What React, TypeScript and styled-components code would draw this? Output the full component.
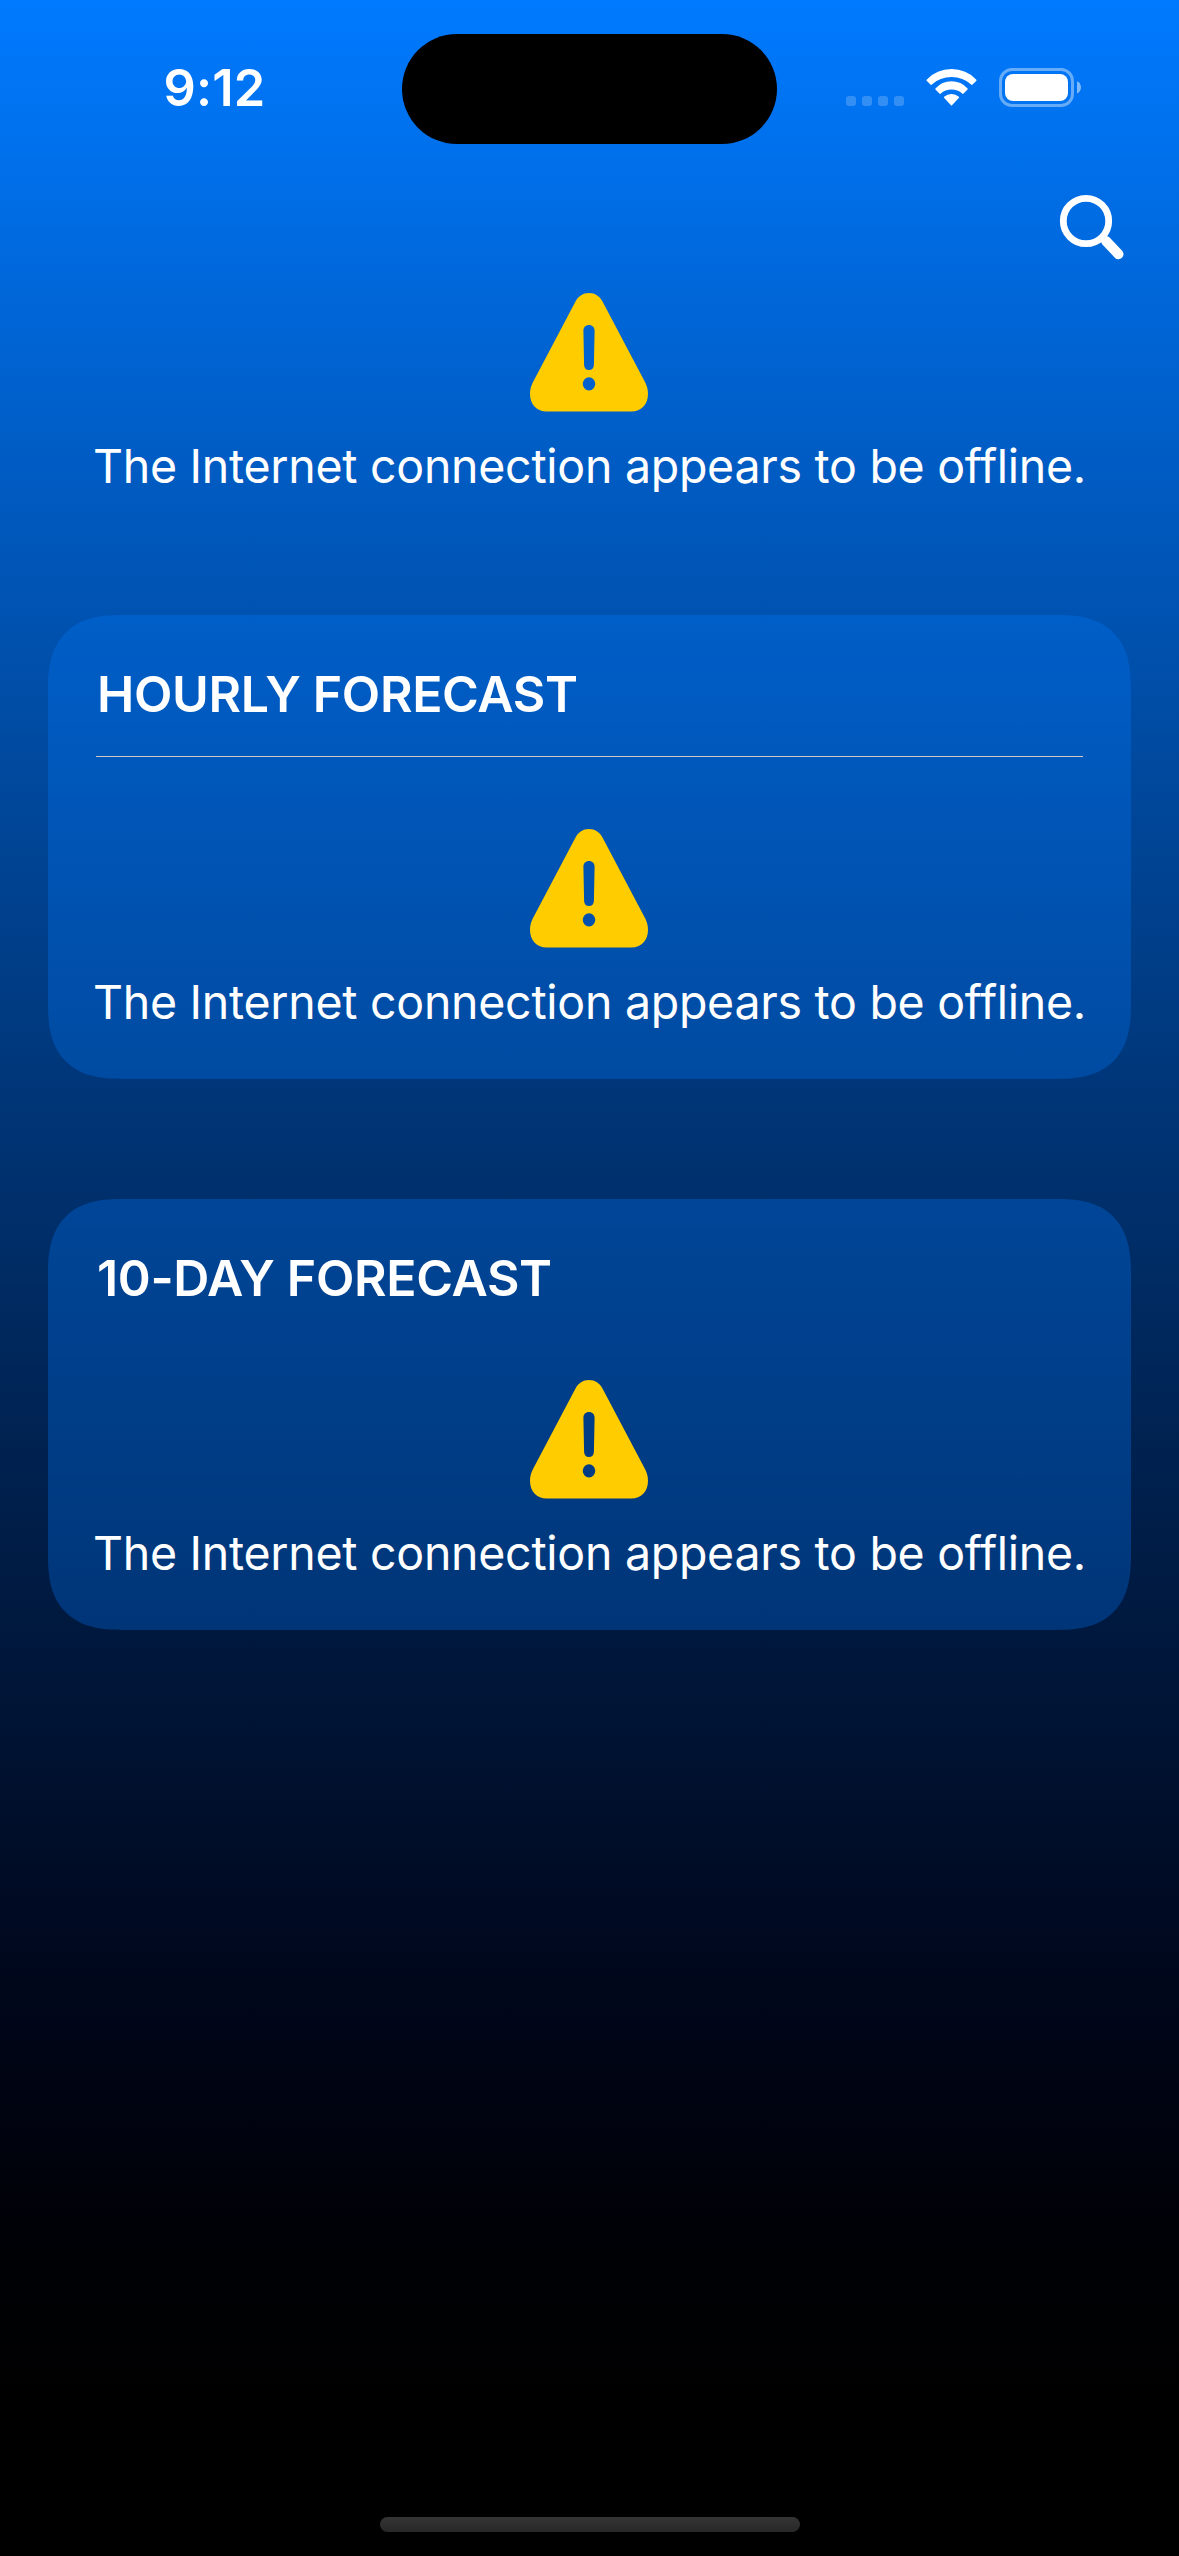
import React from "react";
import styled, { createGlobalStyle } from "styled-components";

const Global = createGlobalStyle`
  * { box-sizing: border-box; }
  body { margin: 0; background: #000; }
`;

const Screen = styled.main`
  width: 1179px;
  height: 2556px;
  overflow: hidden;
  display: flex;
  flex-direction: column;
  font-family: Inter, "Liberation Sans", sans-serif;
  color: #fff;
  background: linear-gradient(180deg in oklab, #007aff 0%, #000 100%);
`;

const StatusBar = styled.header`
  flex: none;
  height: 177px;
  padding-top: 34px;
  display: grid;
  grid-template-columns: 402px 375px 402px;
  align-items: start;
`;

const Clock = styled.time`
  padding: 22px 0 0 163.5px;
  font-size: 50.5px;
  line-height: 64px;
  font-weight: 600;
  letter-spacing: 0.2px;
`;

const Island = styled.div`
  height: 110px;
  border-radius: 55px;
  background: #000;
`;

const Indicators = styled.div`
  display: flex;
  padding: 34px 0 0 69px;
`;

const SignalDots = styled.div`
  display: flex;
  gap: 6px;
  padding-top: 28px;
  width: 80px;
`;

const Dot = styled.i`
  width: 10px;
  height: 10px;
  border-radius: 3px;
  background: rgba(255, 255, 255, 0.2);
`;

const Wifi = styled.svg`
  width: 51px;
  height: 39px;
  margin-right: 22px;
`;

const Battery = styled.svg`
  width: 83px;
  height: 39px;
`;

const Toolbar = styled.nav`
  flex: none;
  height: 116px;
  padding: 17px 54px 0 0;
  display: flex;
  justify-content: flex-end;
`;

const SearchButton = styled.button`
  width: 66px;
  height: 66px;
  padding: 0;
  border: 0;
  background: none;
  color: #fff;
`;

const Notice = styled.section`
  display: flex;
  flex-direction: column;
  align-items: center;
`;

const WarningIcon = styled.svg`
  display: block;
  width: 118px;
  height: 119px;
  margin-right: 1px;
`;

const Message = styled.p`
  margin: 23px 0 0;
  font-size: 46.5px;
  line-height: 62px;
  letter-spacing: -0.28px;
  white-space: nowrap;
`;

const Card = styled.section<{ $height: number; $top: number }>`
  flex: none;
  height: ${(p) => p.$height}px;
  margin: ${(p) => p.$top}px 48px 0;
  padding: 48px 48px 0;
  border-radius: 75px;
  corner-shape: superellipse(1.37);
  background: rgba(0, 122, 255, 0.3);
`;

const Heading = styled.h2`
  margin: 0 0 0 1px;
  font-size: 50px;
  line-height: 62px;
  font-weight: 600;
  letter-spacing: -0.35px;
  white-space: nowrap;
`;

const Divider = styled.hr`
  height: 1px;
  margin: 31px 0 0;
  border: 0;
  background: #d0c8c2;
`;

const CardBody = styled.div<{ $gap: number }>`
  padding-top: ${(p) => p.$gap}px;
`;

const HomeIndicator = styled.div`
  flex: none;
  width: 420px;
  height: 15px;
  margin: auto 0 24px 380px;
  border-radius: 8px;
  background: linear-gradient(#353535, #272727);
`;

function OfflineNotice() {
  return (
    <Notice>
      <WarningIcon viewBox="0 0 118 119" fill="#fc0">
        <path
          fillRule="evenodd"
          d="M59 0C65 0 69.500 3 72.500 8.500L115.500 90C117.200 93.500 118 97 118 101C118 111.500 111 118.500 101.500 118.500H16.500C7 118.500 0 111.500 0 101C0 97 .8 93.500 2.500 90L45.500 8.500C48.500 3 53 0 59 0ZM59 32C55.700 32 53.300 34.400 53.400 37.800L54.100 72C54.200 75 56 77 59 77S63.800 75 63.900 72L64.600 37.800C64.700 34.400 62.300 32 59 32ZM59 84.200A6.300 6.600 0 1 0 59 97.400A6.300 6.600 0 1 0 59 84.200Z"
        />
      </WarningIcon>
      <Message>The Internet connection appears to be offline.</Message>
    </Notice>
  );
}

export default function App() {
  return (
    <>
      <Global />
      <Screen>
        <StatusBar>
          <Clock>9:12</Clock>
          <Island />
          <Indicators>
            <SignalDots>
              <Dot />
              <Dot />
              <Dot />
              <Dot />
            </SignalDots>
            <Wifi viewBox="0 0 51 39" fill="#fff" stroke="#fff" strokeWidth="1.5" strokeLinejoin="round">
              <path d="M1.200 12.200A33.700 33.700 0 0 1 49.800 12.200L46 16.100A30.900 30.900 0 0 0 5 16.100Z" />
              <path d="M10 20.900A20.800 20.800 0 0 1 41 20.900L37 25.100A17.600 17.600 0 0 0 14 25.100Z" />
              <path d="M18.600 29.300A10.400 10.400 0 0 1 32.400 29.300L25.500 36.800Z" />
            </Wifi>
            <Battery viewBox="0 0 83 39">
              <rect x="1.500" y="1.500" width="72" height="36" rx="11.500" fill="none" stroke="#fff" strokeOpacity=".4" strokeWidth="3" />
              <rect x="6" y="6" width="63" height="27" rx="8" fill="#fff" />
              <path d="M78 13.300C83.300 15.500 83.300 23.300 78 25.500Z" fill="#fff" fillOpacity=".5" />
            </Battery>
          </Indicators>
        </StatusBar>
        <Toolbar>
          <SearchButton aria-label="Search">
            <svg width="66" height="66" viewBox="0 0 66 66" fill="none" stroke="currentColor" strokeLinecap="round">
              <circle cx="27" cy="27" r="22.700" strokeWidth="6.800" />
              <path d="M47 47L59.500 60.200" strokeWidth="10" />
            </svg>
          </SearchButton>
        </Toolbar>
        <OfflineNotice />
        <Card $height={464} $top={118}>
          <Heading>HOURLY FORECAST</Heading>
          <Divider />
          <CardBody $gap={72}>
            <OfflineNotice />
          </CardBody>
        </Card>
        <Card $height={431} $top={120}>
          <Heading>10-DAY FORECAST</Heading>
          <CardBody $gap={71}>
            <OfflineNotice />
          </CardBody>
        </Card>
        <HomeIndicator />
      </Screen>
    </>
  );
}
